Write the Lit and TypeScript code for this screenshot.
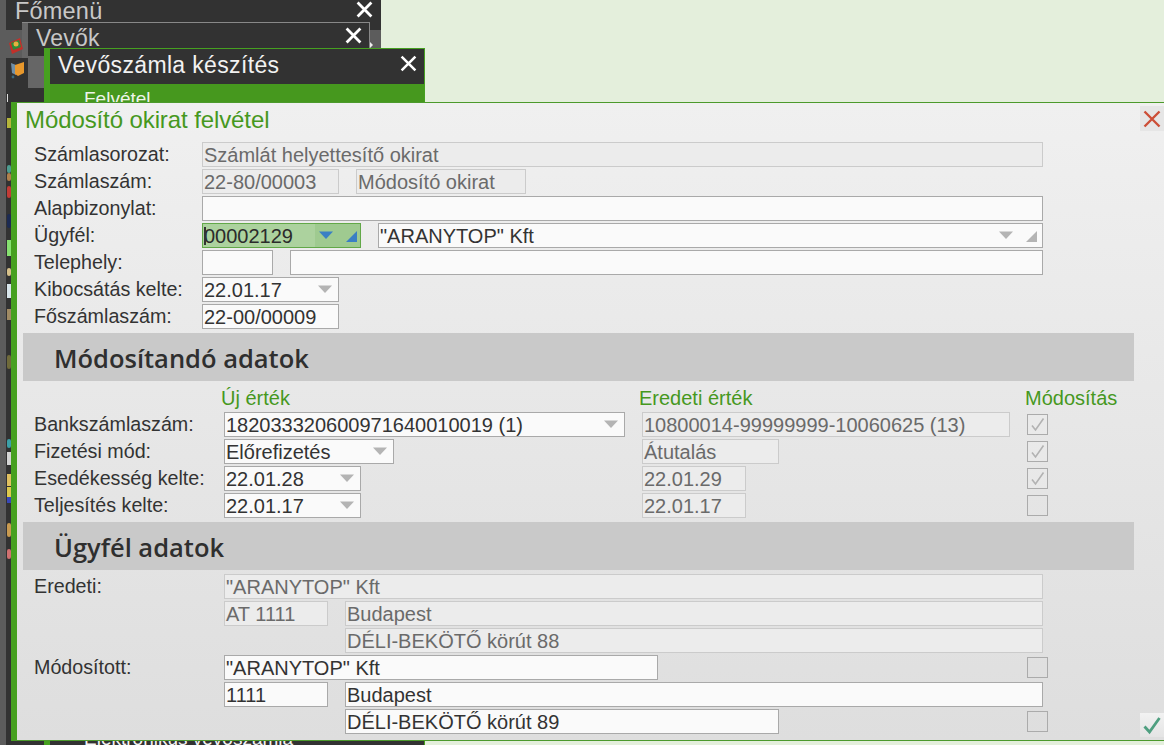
import { LitElement, html, css } from "lit";
import { customElement } from "lit/decorators.js";

const arrow = (c = "#b4b4b4") => html`<svg class="arrow" width="14" height="8" viewBox="0 0 14 8"><path d="M0 0.5H14L7 8Z" fill=${c}/></svg>`;
const corner = (c = "#b4b4b4") => html`<svg class="corner" width="11" height="11" viewBox="0 0 11 11"><path d="M11 0V11H0Z" fill=${c}/></svg>`;
const check = html`<svg width="19" height="19" viewBox="0 0 19 19"><path d="M4 10.5L7.5 15L15.5 3.5" fill="none" stroke="#b2b2b2" stroke-width="1.6"/></svg>`;

const specks: [number, number, number, string][] = [
  [118, 10, 0, "#b5b53a"], [165, 8, 1, "#4d9c90"], [173, 8, 1, "#b0804c"], [186, 12, 1, "#c23b36"],
  [214, 14, 1, "#1c2a52"], [240, 16, 0, "#86e070"], [268, 8, 1, "#d6c08a"], [284, 14, 0, "#d8e4ea"],
  [309, 11, 0, "#a08a64"], [355, 14, 1, "#6f6a3a"], [439, 9, 1, "#3ca0a8"], [452, 13, 0, "#d4d4d4"],
  [474, 12, 0, "#e0c060"], [487, 10, 0, "#dcc84c"], [497, 6, 0, "#3848b8"], [523, 14, 1, "#c89a50"], [549, 10, 1, "#d07070"],
];

@customElement("app-root")
export class AppRoot extends LitElement {
  static styles = css`
    :host { display: block; position: relative; width: 100%; height: 745px; overflow: hidden; background: #e4efdc;
      font-family: "Liberation Sans", Arial, sans-serif; font-size: 20px; color: #333; }
    * { box-sizing: border-box; }

    .win { position: absolute; }
    .main { left: 0; top: 0; width: 381px; height: 745px; background: #5c5c5c; }
    .main-strip { position: absolute; left: 6px; right: 0; top: 58px; bottom: 0; background: #323232; }
    .main-title { position: absolute; left: 6px; top: 0; right: 0; height: 30px; background: #323232; }
    .main-title span { position: absolute; left: 9px; top: -2px; font-size: 23.5px; line-height: 26px; color: #c8c8c8; letter-spacing: .2px; }
    .x { position: absolute; }
    .main-title .x { left: 350px; top: 1px; }
    .mini { position: absolute; left: 370px; top: 42px; width: 0; height: 0; border-left: 3px solid #eee; border-top: 3px solid transparent; border-bottom: 3px solid transparent; }
    .speck { position: absolute; left: 1px; width: 4px; }
    .ico { position: absolute; left: 8px; z-index: 1; }
    .ico1 { top: 37px; }
    .ico2 { top: 60px; }
    .sliver { position: absolute; left: 7px; top: 94px; width: 1px; height: 8px; background: #ddd; }

    .vevok { left: 22px; top: 22px; width: 348px; height: 66px; background: #666; border-top: 1px solid #888; border-right: 1px solid #888; }
    .vevok::after { content: ""; position: absolute; left: 0; top: 35px; bottom: 0; width: 6px; background: #323232; }
    .vevok .bar { position: absolute; left: 6px; right: 0; top: 0; height: 33px; background: #323232; }
    .vevok span { position: absolute; left: 8px; top: 2px; font-size: 23px; line-height: 27px; color: #c8c8c8; letter-spacing: .2px; }
    .vevok .x { left: 317px; top: 4px; }

    .szamla { left: 44px; top: 48px; width: 381px; height: 697px; background: #323232; border-left: 6px solid #46a020; border-top: 1px solid #46a020; border-right: 1px solid #46a020; }
    .szamla .bar { height: 35px; background: #323232; position: relative; }
    .szamla .bar span { position: absolute; left: 8px; top: 3px; font-size: 23px; line-height: 27px; color: #f2f2f2; letter-spacing: .35px; }
    .szamla .x { left: 350px; top: 6px; }
    .szamla .sel { height: 40px; background: #46981e; padding: 4px 0 0 34px; font-size: 19px; line-height: 22px; color: #eef4ea; }
    .szamla .last { position: absolute; left: 34px; top: 679px; font-size: 19px; line-height: 22px; color: #f4f4f4; }

    .modal { left: 11px; top: 102px; width: 1153px; height: 639px; border-left: 6px solid #46a020; border-top: 1px solid #4c9a2c; border-bottom: 1px solid #4c9a2c;
      background: linear-gradient(180deg, #f0f0f0 0%, #dedede 100%); display: flex; flex-direction: column; }
    .head { height: 39px; padding: 4px 0 0 8px; font-size: 24px; line-height: 26px; letter-spacing: -.1px; color: #46981e; flex: none; }
    .close { position: absolute; right: 0; top: 3px; width: 24px; height: 25px; background: #e6e6e6; display: flex; align-items: center; justify-content: center; }
    .ok { position: absolute; right: 0; bottom: 3px; width: 24px; height: 24px; background: linear-gradient(180deg, #f2f2f2, #e4e4e4); display: flex; align-items: center; justify-content: center; }

    .row { display: grid; height: 25px; margin-bottom: 2px; padding-left: 17px; align-items: center; flex: none; }
    .top { grid-template-columns: 168px 1fr; }
    .low { grid-template-columns: 190px 418px 385px 21px; }
    .ext { grid-template-columns: 190px 803px 21px; }
    .fields { display: flex; gap: 17px; height: 25px; }
    .label { font-size: 19.7px; line-height: 25px; white-space: nowrap; }

    .f { height: 25px; border: 1px solid #a9a9a9; background: #fafafa; display: flex; align-items: center; padding: 2px 5px 0 1px; line-height: 23px; color: #333; white-space: nowrap; overflow: hidden; flex: none; }
    .ro { border-color: #cbcbcb; background: #ececec; color: #6a6a6a; }
    .t { flex: 1; min-width: 0; }
    .corner { margin-left: 12px; }
    .arrow { margin-right: 1px; margin-top: -3px; }
    .lookup { position: relative; border-color: #62a848; background: linear-gradient(90deg, #acd29e 0 112px, #9fca90 112px); padding-right: 3px; color: #2b2b2b; }
    .lookup .caret { position: absolute; left: 1px; top: 3px; width: 2px; height: 18px; background: #333; }

    .w819 { width: 819px; } .w841 { width: 841px; } .w137 { width: 137px; } .w170 { width: 170px; } .w159 { width: 159px; } .w665 { width: 665px; }
    .w71 { width: 71px; } .w753 { width: 753px; } .w401 { width: 401px; } .w368 { width: 368px; } .w104 { width: 104px; } .w698 { width: 698px; } .w434 { width: 434px; }
    .indent { margin-left: 121px; }

    .band { margin: 2px 0 0 6px; width: 1111px; height: 48px; background: #c9c9c9; padding-left: 31px; font-family: "Open Sans", sans-serif; font-weight: 600; font-size: 25.5px; line-height: 51px; color: #2f2f2f; flex: none; white-space: nowrap; }
    .cols { display: grid; grid-template-columns: 190px 418px 385px 100px; padding-left: 17px; height: 31px; color: #46981e; line-height: 34px; flex: none; }
    .cols span:nth-child(n+2) { margin-left: -3px; }
    .cols span:last-child { margin-left: -2px; }
    .gap4 { margin-top: 2px; }
    .cb { width: 21px; height: 21px; border: 1px solid #ababab; background: transparent; display: flex; align-items: center; justify-content: center; }
    .cb.on { background: rgba(255,255,255,.12); }
  `;

  private xIcon(size: number, color: string, w: number) {
    return html`<svg class="x" width=${size} height=${size} viewBox="0 0 16 16"><path d="M1.5 1.5L14.5 14.5M14.5 1.5L1.5 14.5" stroke=${color} stroke-width=${w} fill="none"/></svg>`;
  }

  private lowRow(label: string, cls: string, value: string, ocls: string, orig: string, on: boolean) {
    return html`<div class="row low">
      <span class="label">${label}</span>
      <div class="f ${cls}"><span class="t">${value}</span>${arrow()}</div>
      <div class="f ro ${ocls}"><span class="t">${orig}</span></div>
      <div class="cb ${on ? "on" : ""}">${on ? check : ""}</div>
    </div>`;
  }

  render() {
    return html`
      <div class="win main">
        <div class="main-strip">
          ${specks.map(([y, h, r, c]) => html`<div class="speck" style="top:${y - 58}px;height:${h}px;background:${c};border-radius:${r * 2}px"></div>`)}
        </div>
        <div class="main-title"><span>Főmenü</span>${this.xIcon(17, "#fff", 2.6)}</div>
        <div class="mini"></div>
        <svg class="ico ico1" width="15" height="18" viewBox="0 0 15 18"><path d="M1 6L12 1L15 12L4 17Z" fill="#c2302a"/><path d="M3 6L11 3L13 10L5 13Z" fill="#2f8a3a"/><circle cx="8" cy="7" r="2.5" fill="#e8b040"/></svg>
        <svg class="ico ico2" width="17" height="20" viewBox="0 0 17 20"><path d="M3 3L8 5V15L4 13Z" fill="#6f8fa8"/><path d="M7 5L16 2V13L10 16L7 14Z" fill="#e8982c"/><circle cx="5" cy="17" r="1.4" fill="#3a6a80"/></svg>
        <div class="sliver"></div>
      </div>

      <div class="win vevok">
        <div class="bar"><span>Vevők</span>${this.xIcon(17, "#fff", 2.6)}</div>
      </div>

      <div class="win szamla">
        <div class="bar"><span>Vevőszámla készítés</span>${this.xIcon(17, "#fff", 2.4)}</div>
        <div class="sel">Felvétel</div>
        <div class="last">Elektronikus vevőszámla</div>
      </div>

      <div class="win modal">
        <div class="head">Módosító okirat felvétel</div>
        <div class="close"><svg width="18" height="18" viewBox="0 0 18 18"><path d="M1.5 1.5L16.5 16.5M16.5 1.5L1.5 16.5" stroke="#cc4f38" stroke-width="2.4" fill="none"/></svg></div>

        <div class="row top"><span class="label">Számlasorozat:</span><div class="fields"><div class="f ro w841"><span class="t">Számlát helyettesítő okirat</span></div></div></div>
        <div class="row top"><span class="label">Számlaszám:</span><div class="fields"><div class="f ro w137"><span class="t">22-80/00003</span></div><div class="f ro w170"><span class="t">Módosító okirat</span></div></div></div>
        <div class="row top"><span class="label">Alapbizonylat:</span><div class="fields"><div class="f w841"></div></div></div>
        <div class="row top"><span class="label">Ügyfél:</span><div class="fields">
          <div class="f lookup w159"><i class="caret"></i><span class="t">00002129</span>${arrow("#3a7fc4")}${corner("#3a7fc4")}</div>
          <div class="f w665"><span class="t">"ARANYTOP" Kft</span>${arrow()}${corner()}</div>
        </div></div>
        <div class="row top"><span class="label">Telephely:</span><div class="fields"><div class="f w71"></div><div class="f w753"></div></div></div>
        <div class="row top"><span class="label">Kibocsátás kelte:</span><div class="fields"><div class="f w137"><span class="t">22.01.17</span>${arrow()}</div></div></div>
        <div class="row top"><span class="label">Főszámlaszám:</span><div class="fields"><div class="f w137"><span class="t">22-00/00009</span></div></div></div>

        <div class="band">Módosítandó adatok</div>
        <div class="cols"><span></span><span>Új érték</span><span>Eredeti érték</span><span>Módosítás</span></div>
        ${this.lowRow("Bankszámlaszám:", "w401", "182033320600971640010019 (1)", "w368", "10800014-99999999-10060625 (13)", true)}
        ${this.lowRow("Fizetési mód:", "w170", "Előrefizetés", "w137", "Átutalás", true)}
        ${this.lowRow("Esedékesség kelte:", "w137", "22.01.28", "w104", "22.01.29", true)}
        ${this.lowRow("Teljesítés kelte:", "w137", "22.01.17", "w104", "22.01.17", false)}

        <div class="band">Ügyfél adatok</div>
        <div class="gap4"></div>
        <div class="row ext gap4"><span class="label">Eredeti:</span><div class="fields"><div class="f ro w819"><span class="t">"ARANYTOP" Kft</span></div></div></div>
        <div class="row ext"><span></span><div class="fields"><div class="f ro w104"><span class="t">AT 1111</span></div><div class="f ro w698"><span class="t">Budapest</span></div></div></div>
        <div class="row ext"><span></span><div class="fields"><div class="f ro w698 indent"><span class="t">DÉLI-BEKÖTŐ körút 88</span></div></div></div>
        <div class="row ext"><span class="label">Módosított:</span><div class="fields"><div class="f w434"><span class="t">"ARANYTOP" Kft</span></div></div><div class="cb"></div></div>
        <div class="row ext"><span></span><div class="fields"><div class="f w104"><span class="t">1111</span></div><div class="f w698"><span class="t">Budapest</span></div></div></div>
        <div class="row ext"><span></span><div class="fields"><div class="f w434 indent"><span class="t">DÉLI-BEKÖTŐ körút 89</span></div></div><div class="cb"></div></div>

        <div class="ok"><svg width="20" height="20" viewBox="0 0 20 20"><path d="M2.5 11.5L7.5 17L17.5 3" stroke="#4f9f80" stroke-width="2.8" fill="none"/></svg></div>
      </div>
    `;
  }
}
